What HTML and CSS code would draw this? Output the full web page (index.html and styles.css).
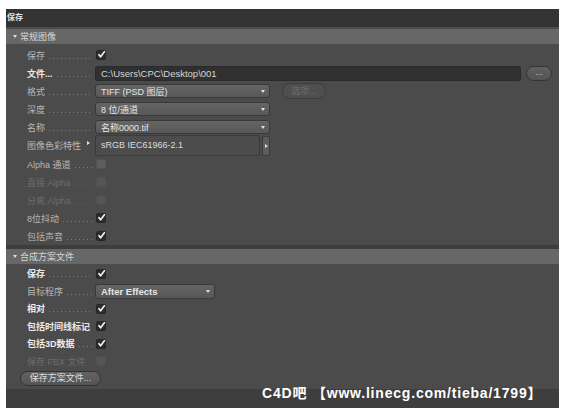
FILE: index.html
```html
<!DOCTYPE html>
<html lang="zh-CN">
<head>
    <meta charset="UTF-8">
    <title>保存</title>
    <link rel="stylesheet" href="styles.css">
</head>
<body>
    <div class="panel">
        <div class="title-bar">保存</div>

        <!-- 常规图像 -->
        <div class="group first">
            <div class="group-head"><span class="caret"></span>常规图像</div>
            <div class="group-body">
                <div class="row">
                    <span class="label">保存<i class="dots"></i></span>
                    <span class="check on"><svg viewBox="0 0 10 10"><path d="M2.2 5.2 L4 7.6 L8.2 2"/></svg></span>
                </div>
                <div class="row">
                    <span class="label strong">文件...<i class="dots"></i></span>
                    <span class="path">C:\Users\CPC\Desktop\001</span>
                    <span class="browse">...</span>
                </div>
                <div class="row">
                    <span class="label">格式<i class="dots"></i></span>
                    <span class="select"><span>TIFF (PSD 图层)</span><span class="arrow"></span></span>
                    <span class="opt-btn">选项...</span>
                </div>
                <div class="row">
                    <span class="label">深度<i class="dots"></i></span>
                    <span class="select"><span>8 位/通道</span><span class="arrow"></span></span>
                </div>
                <div class="row">
                    <span class="label">名称<i class="dots"></i></span>
                    <span class="select"><span>名称0000.tif</span><span class="arrow"></span></span>
                </div>
                <div class="row tall">
                    <span class="label">图像色彩特性<i class="marker"></i></span>
                    <span class="profile">sRGB IEC61966-2.1</span>
                    <span class="profile-btn"><i></i></span>
                </div>
                <div class="row">
                    <span class="label">Alpha 通道<i class="dots"></i></span>
                    <span class="check"></span>
                </div>
                <div class="row">
                    <span class="label off">直接 Alpha<i class="dots"></i></span>
                    <span class="check off"></span>
                </div>
                <div class="row">
                    <span class="label off">分离 Alpha<i class="dots"></i></span>
                    <span class="check off"></span>
                </div>
                <div class="row">
                    <span class="label">8位抖动<i class="dots"></i></span>
                    <span class="check on"><svg viewBox="0 0 10 10"><path d="M2.2 5.2 L4 7.6 L8.2 2"/></svg></span>
                </div>
                <div class="row">
                    <span class="label">包括声音<i class="dots"></i></span>
                    <span class="check on"><svg viewBox="0 0 10 10"><path d="M2.2 5.2 L4 7.6 L8.2 2"/></svg></span>
                </div>
            </div>
        </div>

        <!-- 合成方案文件 -->
        <div class="group second">
            <div class="group-head"><span class="caret"></span>合成方案文件</div>
            <div class="group-body compact">
                <div class="row">
                    <span class="label strong">保存<i class="dots"></i></span>
                    <span class="check on"><svg viewBox="0 0 10 10"><path d="M2.2 5.2 L4 7.6 L8.2 2"/></svg></span>
                </div>
                <div class="row">
                    <span class="label">目标程序<i class="dots"></i></span>
                    <span class="select short"><span>After Effects</span><span class="arrow"></span></span>
                </div>
                <div class="row">
                    <span class="label strong">相对<i class="dots"></i></span>
                    <span class="check on"><svg viewBox="0 0 10 10"><path d="M2.2 5.2 L4 7.6 L8.2 2"/></svg></span>
                </div>
                <div class="row">
                    <span class="label strong">包括时间线标记</span>
                    <span class="check on"><svg viewBox="0 0 10 10"><path d="M2.2 5.2 L4 7.6 L8.2 2"/></svg></span>
                </div>
                <div class="row">
                    <span class="label strong">包括3D数据<i class="dots"></i></span>
                    <span class="check on"><svg viewBox="0 0 10 10"><path d="M2.2 5.2 L4 7.6 L8.2 2"/></svg></span>
                </div>
                <div class="row">
                    <span class="label off">保存 FBX 文件</span>
                    <span class="check off"></span>
                </div>
                <div class="row">
                    <span class="save-btn">保存方案文件...</span>
                </div>
            </div>
        </div>

        <div class="footer"></div>
        <div class="watermark">C4D吧 【www.linecg.com/tieba/1799】</div>
    </div>
</body>
</html>
```

FILE: styles.css
```css
* {
    box-sizing: border-box;
}

body {
    margin: 0;
    background: #fff;
    font-family: "Liberation Sans", "Noto Sans CJK SC", sans-serif;
    font-size: 9px;
    color: #b8b8b8;
}

.panel {
    position: relative;
    margin: 9px 0 0 6px;
    width: 553px;
    height: 399px;
    background: #4b4b4b;
    display: flex;
    flex-direction: column;
}

.title-bar {
    height: 18px;
    line-height: 18px;
    background: #333;
    color: #e2e2e2;
    font-weight: bold;
    font-size: 8px;
    padding-left: 1px;
}

/* collapsible group header */
.group-head {
    height: 15px;
    background: #676767;
    color: #d8d8d8;
    padding-left: 7px;
    display: flex;
    align-items: center;
}

.caret {
    width: 0;
    height: 0;
    border-left: 2.5px solid transparent;
    border-right: 2.5px solid transparent;
    border-top: 3px solid #ddd;
    margin-right: 3px;
}

.first {
    margin-top: 2px;
}

.second {
    border-top: 4px solid #3d3d3d;
}

.group-body {
    padding: 2px 0 0 21px;
}

.compact {
    padding-top: 1px;
}

.row {
    display: flex;
    align-items: center;
    height: 18px;
}

.compact .row {
    height: 17.5px;
}

.row.tall {
    height: 19px;
}

.label {
    width: 66px;
    margin-right: 2px;
    display: flex;
    align-items: center;
    white-space: nowrap;
    flex-shrink: 0;
}

.label.strong {
    color: #ebebeb;
    font-weight: bold;
}

.label.off {
    color: #6c6c6c;
}

/* leader dots drawn as a repeating pattern */
.dots {
    flex: 1;
    height: 1px;
    margin: 6px 0 0 4px;
    background-image: linear-gradient(to right, #7c7c7c 1px, transparent 1px);
    background-size: 4px 1px;
    background-repeat: repeat-x;
}

.label.off .dots {
    background-image: linear-gradient(to right, #626262 1px, transparent 1px);
}

.marker {
    margin-left: auto;
    margin-bottom: 6px;
    width: 0;
    height: 0;
    border-top: 2px solid transparent;
    border-bottom: 2px solid transparent;
    border-left: 3px solid #e6e6e6;
    margin-right: 3px;
}

/* checkboxes */
.check {
    width: 10px;
    height: 10px;
    margin-left: 1px;
    border-radius: 2px;
    background: #5e5e5e;
    border: 1px solid #545454;
}

.check.on {
    background: #2c2c2c;
    border-color: #262626;
}

.check.off {
    background: #555;
    border-color: #505050;
}

.check svg {
    display: block;
    width: 9px;
    height: 9px;
    margin: -1px 0 0 0;
    overflow: visible;
}

.check svg path {
    fill: none;
    stroke: #f0f0f0;
    stroke-width: 1.9;
    stroke-linecap: round;
    stroke-linejoin: round;
}

/* inputs */
.path {
    width: 426px;
    height: 15px;
    line-height: 13px;
    padding-left: 5px;
    background: #303030;
    border: 1px solid #2a2a2a;
    border-radius: 2px;
    color: #d6d6d6;
    font-size: 9.5px;
}

.browse {
    margin-left: 5px;
    width: 26px;
    height: 15px;
    line-height: 10px;
    text-align: center;
    border-radius: 8px;
    background: linear-gradient(#606060, #535353);
    border: 1px solid #343434;
    color: #c4c4c4;
}

.select {
    width: 175px;
    height: 14px;
    display: flex;
    align-items: center;
    justify-content: space-between;
    padding: 0 4px 0 5px;
    background: linear-gradient(#656565, #575757);
    border: 1px solid #393939;
    border-radius: 3px;
    color: #e6e6e6;
}

.select.short {
    width: 120px;
    height: 15px;
    font-weight: bold;
    font-size: 9.5px;
}

.arrow {
    width: 0;
    height: 0;
    border-left: 2.5px solid transparent;
    border-right: 2.5px solid transparent;
    border-top: 3px solid #e0e0e0;
}

.opt-btn {
    margin-left: 12px;
    width: 44px;
    height: 16px;
    line-height: 14px;
    text-align: center;
    border-radius: 8px;
    background: #4f4f4f;
    border: 1px solid #3d3d3d;
    color: #6e6e6e;
}

.profile {
    width: 165px;
    height: 21px;
    line-height: 19px;
    padding-left: 5px;
    background: #4c4c4c;
    border: 1px solid #3a3a3a;
    border-radius: 2px;
    color: #dcdcdc;
}

.profile-btn {
    margin-left: 2px;
    width: 8px;
    height: 20px;
    display: flex;
    align-items: center;
    justify-content: center;
    background: #5d5d5d;
    border: 1px solid #3a3a3a;
    border-radius: 2px;
}

.profile-btn i {
    width: 0;
    height: 0;
    border-top: 2px solid transparent;
    border-bottom: 2px solid transparent;
    border-left: 3px solid #ddd;
}

.save-btn {
    margin-left: -7px;
    width: 81px;
    height: 15px;
    line-height: 13px;
    text-align: center;
    border-radius: 8px;
    background: linear-gradient(#636363, #545454);
    border: 1px solid #333;
    color: #dedede;
}

.footer {
    margin-top: auto;
    height: 19px;
    background: #3e3e3e;
}

.watermark {
    position: absolute;
    left: 256px;
    top: 376px;
    line-height: 16px;
    font-size: 14px;
    font-weight: bold;
    color: #fff;
    letter-spacing: 0.8px;
    white-space: nowrap;
}
```
